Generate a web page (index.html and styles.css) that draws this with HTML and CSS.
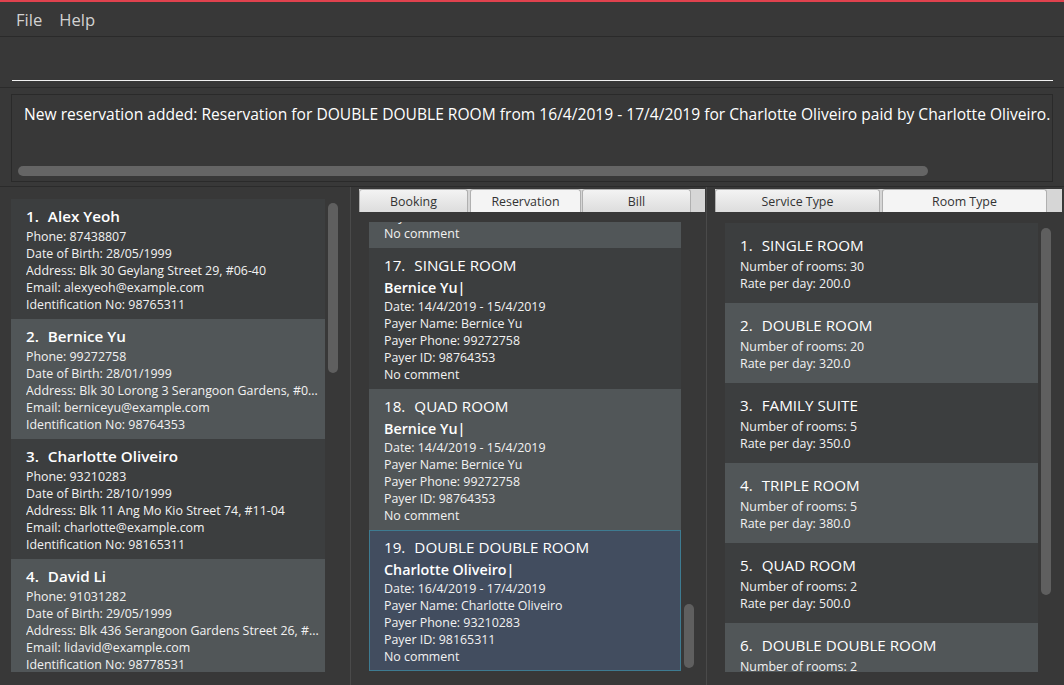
FILE: index.html
```html
<!DOCTYPE html>
<html>
<head>
<meta charset="utf-8">
<link rel="stylesheet" href="styles.css">
</head>
<body>
<div class="menubar">
  <span class="menu-item">File</span>
  <span class="menu-item">Help</span>
</div>
<div class="cmd">
  <div class="cmd-field"></div>
</div>
<div class="result">
  <div class="result-box">
    <div class="result-text">New reservation added: Reservation for DOUBLE DOUBLE ROOM from 16/4/2019 - 17/4/2019 for Charlotte Oliveiro paid by Charlotte Oliveiro.</div>
    <div class="hscroll"><div class="hthumb"></div></div>
  </div>
</div>
<div class="main">
  <div class="panel left">
    <div class="list">
      <div class="pcell even">
        <div class="title"><span class="id">1.</span>Alex Yeoh</div>
        <div class="line">Phone: 87438807</div>
        <div class="line">Date of Birth: 28/05/1999</div>
        <div class="line">Address: Blk 30 Geylang Street 29, #06-40</div>
        <div class="line">Email: alexyeoh@example.com</div>
        <div class="line">Identification No: 98765311</div>
      </div>
      <div class="pcell odd">
        <div class="title"><span class="id">2.</span>Bernice Yu</div>
        <div class="line">Phone: 99272758</div>
        <div class="line">Date of Birth: 28/01/1999</div>
        <div class="line">Address: Blk 30 Lorong 3 Serangoon Gardens, #0...</div>
        <div class="line">Email: berniceyu@example.com</div>
        <div class="line">Identification No: 98764353</div>
      </div>
      <div class="pcell even">
        <div class="title"><span class="id">3.</span>Charlotte Oliveiro</div>
        <div class="line">Phone: 93210283</div>
        <div class="line">Date of Birth: 28/10/1999</div>
        <div class="line">Address: Blk 11 Ang Mo Kio Street 74, #11-04</div>
        <div class="line">Email: charlotte@example.com</div>
        <div class="line">Identification No: 98165311</div>
      </div>
      <div class="pcell odd">
        <div class="title"><span class="id">4.</span>David Li</div>
        <div class="line">Phone: 91031282</div>
        <div class="line">Date of Birth: 29/05/1999</div>
        <div class="line">Address: Blk 436 Serangoon Gardens Street 26, #...</div>
        <div class="line">Email: lidavid@example.com</div>
        <div class="line">Identification No: 98778531</div>
      </div>
    </div>
    <div class="vscroll"><div class="vthumb" style="margin-top:4px;height:170px"></div></div>
  </div>
  <div class="divider"></div>
  <div class="panel middle">
    <div class="tabpane">
      <div class="tabhdr">
        <div class="tab tab-mid">Booking</div>
        <div class="tab tab-mid tab-sel gap2">Reservation</div>
        <div class="tab tab-mid gap1">Bill</div>
      </div>
      <div class="tabcontent mid-content">
        <div class="list">
          <div class="rcell odd partial">
            <div class="line">Payer ID: 98765311</div>
            <div class="line">No comment</div>
          </div>
          <div class="rcell even">
            <div class="title"><span class="id">17.</span>SINGLE ROOM</div>
            <div class="name">Bernice Yu|</div>
            <div class="line">Date: 14/4/2019 - 15/4/2019</div>
            <div class="line">Payer Name: Bernice Yu</div>
            <div class="line">Payer Phone: 99272758</div>
            <div class="line">Payer ID: 98764353</div>
            <div class="line">No comment</div>
          </div>
          <div class="rcell odd">
            <div class="title"><span class="id">18.</span>QUAD ROOM</div>
            <div class="name">Bernice Yu|</div>
            <div class="line">Date: 14/4/2019 - 15/4/2019</div>
            <div class="line">Payer Name: Bernice Yu</div>
            <div class="line">Payer Phone: 99272758</div>
            <div class="line">Payer ID: 98764353</div>
            <div class="line">No comment</div>
          </div>
          <div class="rcell selected">
            <div class="title"><span class="id">19.</span>DOUBLE DOUBLE ROOM</div>
            <div class="name">Charlotte Oliveiro|</div>
            <div class="line">Date: 16/4/2019 - 17/4/2019</div>
            <div class="line">Payer Name: Charlotte Oliveiro</div>
            <div class="line">Payer Phone: 93210283</div>
            <div class="line">Payer ID: 98165311</div>
            <div class="line">No comment</div>
          </div>
        </div>
        <div class="vscroll"><div class="vthumb" style="margin-top:382px;height:64px"></div></div>
      </div>
    </div>
  </div>
  <div class="divider"></div>
  <div class="panel right">
    <div class="tabpane">
      <div class="tabhdr">
        <div class="tab tab-wide">Service Type</div>
        <div class="tab tab-wide tab-sel gap2">Room Type</div>
      </div>
      <div class="tabcontent right-content">
        <div class="list">
          <div class="tcell even">
            <div class="title"><span class="id">1.</span>SINGLE ROOM</div>
            <div class="line">Number of rooms: 30</div>
            <div class="line">Rate per day: 200.0</div>
          </div>
          <div class="tcell odd">
            <div class="title"><span class="id">2.</span>DOUBLE ROOM</div>
            <div class="line">Number of rooms: 20</div>
            <div class="line">Rate per day: 320.0</div>
          </div>
          <div class="tcell even">
            <div class="title"><span class="id">3.</span>FAMILY SUITE</div>
            <div class="line">Number of rooms: 5</div>
            <div class="line">Rate per day: 350.0</div>
          </div>
          <div class="tcell odd">
            <div class="title"><span class="id">4.</span>TRIPLE ROOM</div>
            <div class="line">Number of rooms: 5</div>
            <div class="line">Rate per day: 380.0</div>
          </div>
          <div class="tcell even">
            <div class="title"><span class="id">5.</span>QUAD ROOM</div>
            <div class="line">Number of rooms: 2</div>
            <div class="line">Rate per day: 500.0</div>
          </div>
          <div class="tcell odd">
            <div class="title"><span class="id">6.</span>DOUBLE DOUBLE ROOM</div>
            <div class="line">Number of rooms: 2</div>
            <div class="line">Rate per day: 500.0</div>
          </div>
        </div>
        <div class="vscroll"><div class="vthumb" style="margin-top:5px;height:367px"></div></div>
      </div>
    </div>
  </div>
</div>
</body>
</html>
```
FILE: styles.css
```css
* {
  box-sizing: border-box;
  margin: 0;
  padding: 0;
}

html, body {
  width: 1064px;
  height: 685px;
  overflow: hidden;
}

body {
  background: #383838;
  border-top: 2px solid #e0424e;
  font-family: "Open Sans", "Noto Sans", sans-serif;
  color: #ffffff;
}

.menubar {
  height: 35px;
  display: flex;
  align-items: center;
  padding-left: 16px;
  border-bottom: 1px solid #2a2a2a;
  font-size: 16.6px;
  color: #d2d2d2;
}

.menu-item {
  margin-right: 17px;
}

.cmd {
  height: 51px;
  padding: 0 11px 0 12px;
  border-bottom: 1px solid #2b2b2b;
}

.cmd-field {
  height: 44px;
  border-bottom: 1px solid #f2f2f2;
}

.result {
  height: 99px;
  padding: 6px 11px 4px 11px;
  border-bottom: 1px solid #2b2b2b;
}

.result-box {
  height: 88px;
  border: 1px solid #2a2a2a;
  display: flex;
  flex-direction: column;
  justify-content: space-between;
  padding: 8px 0 5px 6px;
}

.result-text {
  padding-left: 6px;
  font-size: 15.6px;
  line-height: 22px;
  white-space: nowrap;
  overflow: hidden;
  color: #ffffff;
}

.hscroll {
  height: 10px;
}

.hthumb {
  width: 910px;
  height: 10px;
  border-radius: 5px;
  background: #656565;
}

.main {
  display: flex;
  height: 498px;
}

.divider {
  width: 1px;
  background: #4a4a4a;
}

.panel {
  display: flex;
  min-height: 0;
}

.left {
  width: 350px;
  padding: 12px 12px 13px 11px;
}

.middle {
  width: 355px;
  padding: 2px 1px 13px 8px;
}

.right {
  width: 357px;
  padding: 2px 2px 13px 8px;
}

.list {
  flex: 1;
  min-height: 0;
  display: flex;
  flex-direction: column;
  overflow: hidden;
}

.vscroll {
  width: 10px;
  margin-left: 3px;
  flex: none;
}

.vthumb {
  width: 10px;
  border-radius: 5px;
  background: #5f5f5f;
}

.tabpane {
  flex: 1;
  min-height: 0;
  display: flex;
  flex-direction: column;
}

.tabhdr {
  height: 23px;
  flex: none;
  display: flex;
  background: #d6d6d6;
}

.tab {
  height: 23px;
  display: flex;
  align-items: center;
  justify-content: center;
  font-size: 12.4px;
  color: #333333;
  background: linear-gradient(#f3f3f3, #dddddd);
  border: 1px solid #b0b0b0;
  border-bottom: none;
  border-radius: 3px 3px 0 0;
}

.tab-mid {
  width: 109px;
}

.tab-mid.tab-sel {
  width: 111px;
}

.tab-wide {
  width: 165px;
}

.tab-sel {
  background: #f4f4f4;
}

.gap2 {
  margin-left: 2px;
}

.gap1 {
  margin-left: 1px;
}

.tabcontent {
  flex: 1;
  min-height: 0;
  display: flex;
}

.mid-content {
  padding: 10px 11px 0 10px;
}

.right-content {
  padding: 11px 11px 0 10px;
}

.even {
  background: #3c3e3f;
}

.odd {
  background: #515658;
}

.selected {
  background: #424d5f;
  border: 1px solid #3e7b91;
}

.title {
  height: 23px;
  line-height: 23px;
  font-size: 15.2px;
  white-space: nowrap;
  flex: none;
}

.id {
  margin-right: 9px;
}

.line {
  flex: none;
  height: 17px;
  line-height: 17px;
  font-size: 12.4px;
  white-space: nowrap;
  overflow: hidden;
  color: #f2f2f2;
}

.name {
  flex: none;
  height: 21px;
  line-height: 21px;
  font-size: 14.3px;
  font-weight: 600;
  white-space: nowrap;
}

.pcell {
  flex: none;
  height: 120px;
  padding: 6px 6px 0 15px;
}

.pcell .title {
  font-weight: 600;
}

.rcell {
  flex: none;
  height: 141px;
  padding: 6px 6px 0 15px;
}

.rcell.selected {
  padding: 5px 5px 0 14px;
}

.rcell.partial {
  height: 26px;
  padding: 0 6px 6px 15px;
  display: flex;
  flex-direction: column;
  justify-content: flex-end;
  overflow: hidden;
}

.tcell {
  flex: none;
  height: 80px;
  padding: 11px 6px 0 15px;
}

.tcell .title {
  height: 22px;
  line-height: 22px;
  margin-bottom: 2px;
}
```
